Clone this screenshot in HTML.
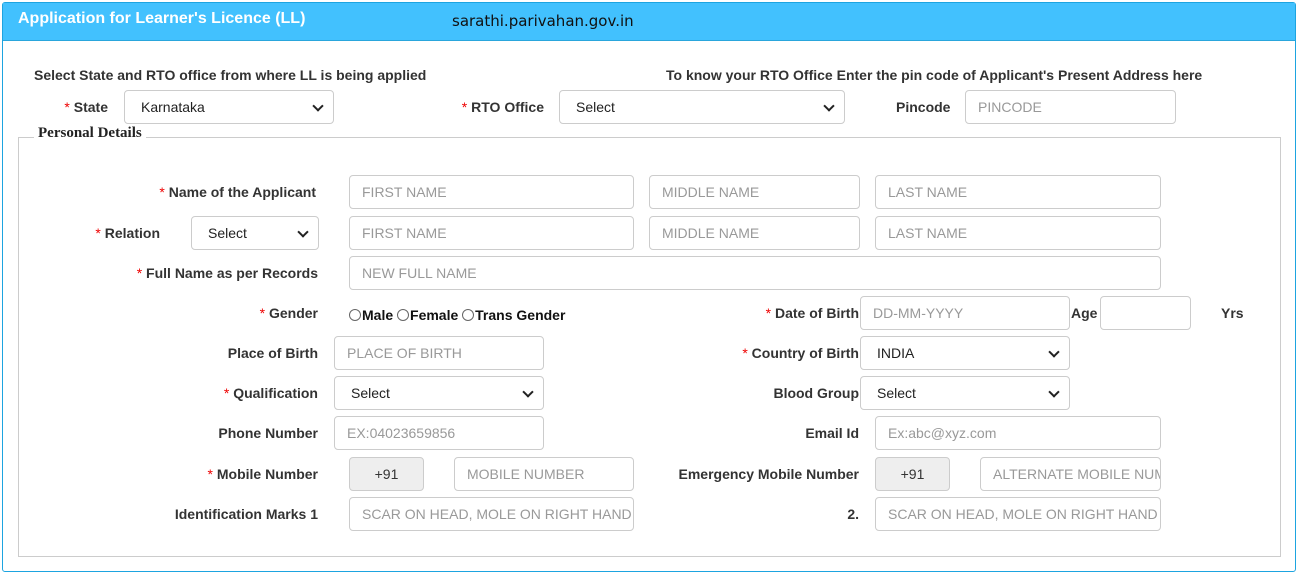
<!DOCTYPE html>
<html><head><style>
*{box-sizing:border-box;margin:0;padding:0}
body{width:1298px;height:547px;background:#fff;font-family:"Liberation Sans",Arial,sans-serif;position:relative;overflow:hidden}
.box{position:absolute;left:2px;top:2px;width:1294px;height:570px;border:1px solid #1da4e0;border-radius:3px}
.hdr{position:absolute;left:3px;top:3px;width:1292px;height:38px;background:#42c1fe;border-bottom:1px solid #2aa6dc}
.t{position:absolute;font-size:14px;font-weight:bold;color:#333;white-space:nowrap;line-height:16px}
.r{text-align:right}
.s{color:#e00;font-weight:normal}
.i{position:absolute;height:34px;border:1px solid #ccc;border-radius:4px;font-size:14px;color:#999;padding:0 12px;line-height:32px;background:#fff;white-space:nowrap;overflow:hidden}
.sel{color:#222;padding-left:16px}
.sel:after{content:"";position:absolute;right:11px;top:11px;width:6px;height:6px;border-right:2px solid #222;border-bottom:2px solid #222;transform:rotate(45deg)}
.g{background:#eee;color:#333;text-align:center;padding:0}
.fs{position:absolute;left:18px;top:137px;width:1263px;height:420px;border:1px solid #ccc}
.lg{position:absolute;left:34px;top:125px;background:#fff;padding:0 4px;font-family:"Liberation Serif",serif;font-weight:bold;font-size:15px;color:#222}
.rad{display:inline-block;width:12px;height:12px;border:1px solid #666;border-radius:50%;vertical-align:-1px;margin-right:1px}
</style></head><body>
<div class="box"></div>
<div class="hdr"></div>
<div class="t" style="left:18px;top:11px;color:#fff;font-size:16px">Application for Learner's Licence (LL)</div>
<div class="t" style="left:452px;top:13px;color:#111;font-weight:normal;font-family:'DejaVu Sans',sans-serif;font-size:15px">sarathi.parivahan.gov.in</div>

<div class="t" style="left:34px;top:67px;font-size:14px">Select State and RTO office from where LL is being applied</div>
<div class="t" style="left:666px;top:67px;font-size:14px">To know your RTO Office Enter the pin code of Applicant's Present Address here</div>
<div class="t r" style="right:1190px;top:99px"><span class="s">*</span> State</div>
<div class="i sel" style="left:124px;top:90px;width:210px">Karnataka</div>
<div class="t r" style="right:754px;top:99px"><span class="s">*</span> RTO Office</div>
<div class="i sel" style="left:559px;top:90px;width:286px">Select</div>
<div class="t" style="left:896px;top:99px">Pincode</div>
<div class="i" style="left:965px;top:90px;width:211px">PINCODE</div>

<div class="fs"></div>
<div class="lg">Personal Details</div>

<div class="t r" style="right:982px;top:184px"><span class="s">*</span> Name of the Applicant</div>
<div class="i" style="left:349px;top:175px;width:285px">FIRST NAME</div>
<div class="i" style="left:649px;top:175px;width:211px">MIDDLE NAME</div>
<div class="i" style="left:875px;top:175px;width:286px">LAST NAME</div>

<div class="t r" style="right:1138px;top:225px"><span class="s">*</span> Relation</div>
<div class="i sel" style="left:191px;top:216px;width:128px">Select</div>
<div class="i" style="left:349px;top:216px;width:285px">FIRST NAME</div>
<div class="i" style="left:649px;top:216px;width:211px">MIDDLE NAME</div>
<div class="i" style="left:875px;top:216px;width:286px">LAST NAME</div>

<div class="t r" style="right:980px;top:265px"><span class="s">*</span> Full Name as per Records</div>
<div class="i" style="left:349px;top:256px;width:812px">NEW FULL NAME</div>

<div class="t r" style="right:980px;top:305px"><span class="s">*</span> Gender</div>
<div class="t" style="left:349px;top:307px;color:#111"><span class="rad"></span>Male <span class="rad"></span>Female <span class="rad"></span>Trans Gender</div>
<div class="t r" style="right:439px;top:305px"><span class="s">*</span> Date of Birth</div>
<div class="i" style="left:860px;top:296px;width:210px">DD-MM-YYYY</div>
<div class="t" style="left:1071px;top:305px">Age</div>
<div class="i" style="left:1100px;top:296px;width:91px"></div>
<div class="t" style="left:1221px;top:305px">Yrs</div>

<div class="t r" style="right:980px;top:345px">Place of Birth</div>
<div class="i" style="left:334px;top:336px;width:210px">PLACE OF BIRTH</div>
<div class="t r" style="right:439px;top:345px"><span class="s">*</span> Country of Birth</div>
<div class="i sel" style="left:860px;top:336px;width:210px">INDIA</div>

<div class="t r" style="right:980px;top:385px"><span class="s">*</span> Qualification</div>
<div class="i sel" style="left:334px;top:376px;width:210px">Select</div>
<div class="t r" style="right:439px;top:385px">Blood Group</div>
<div class="i sel" style="left:860px;top:376px;width:210px">Select</div>

<div class="t r" style="right:980px;top:425px">Phone Number</div>
<div class="i" style="left:334px;top:416px;width:210px">EX:04023659856</div>
<div class="t r" style="right:439px;top:425px">Email Id</div>
<div class="i" style="left:875px;top:416px;width:286px">Ex:abc@xyz.com</div>

<div class="t r" style="right:980px;top:466px"><span class="s">*</span> Mobile Number</div>
<div class="i g" style="left:349px;top:457px;width:75px">+91</div>
<div class="i" style="left:454px;top:457px;width:180px">MOBILE NUMBER</div>
<div class="t r" style="right:439px;top:466px">Emergency Mobile Number</div>
<div class="i g" style="left:875px;top:457px;width:75px">+91</div>
<div class="i" style="left:980px;top:457px;width:181px">ALTERNATE MOBILE NUMBER</div>

<div class="t r" style="right:980px;top:506px">Identification Marks 1</div>
<div class="i" style="left:349px;top:497px;width:285px">SCAR ON HEAD, MOLE ON RIGHT HAND</div>
<div class="t r" style="right:439px;top:506px">2.</div>
<div class="i" style="left:875px;top:497px;width:286px">SCAR ON HEAD, MOLE ON RIGHT HAND</div>
</body></html>
